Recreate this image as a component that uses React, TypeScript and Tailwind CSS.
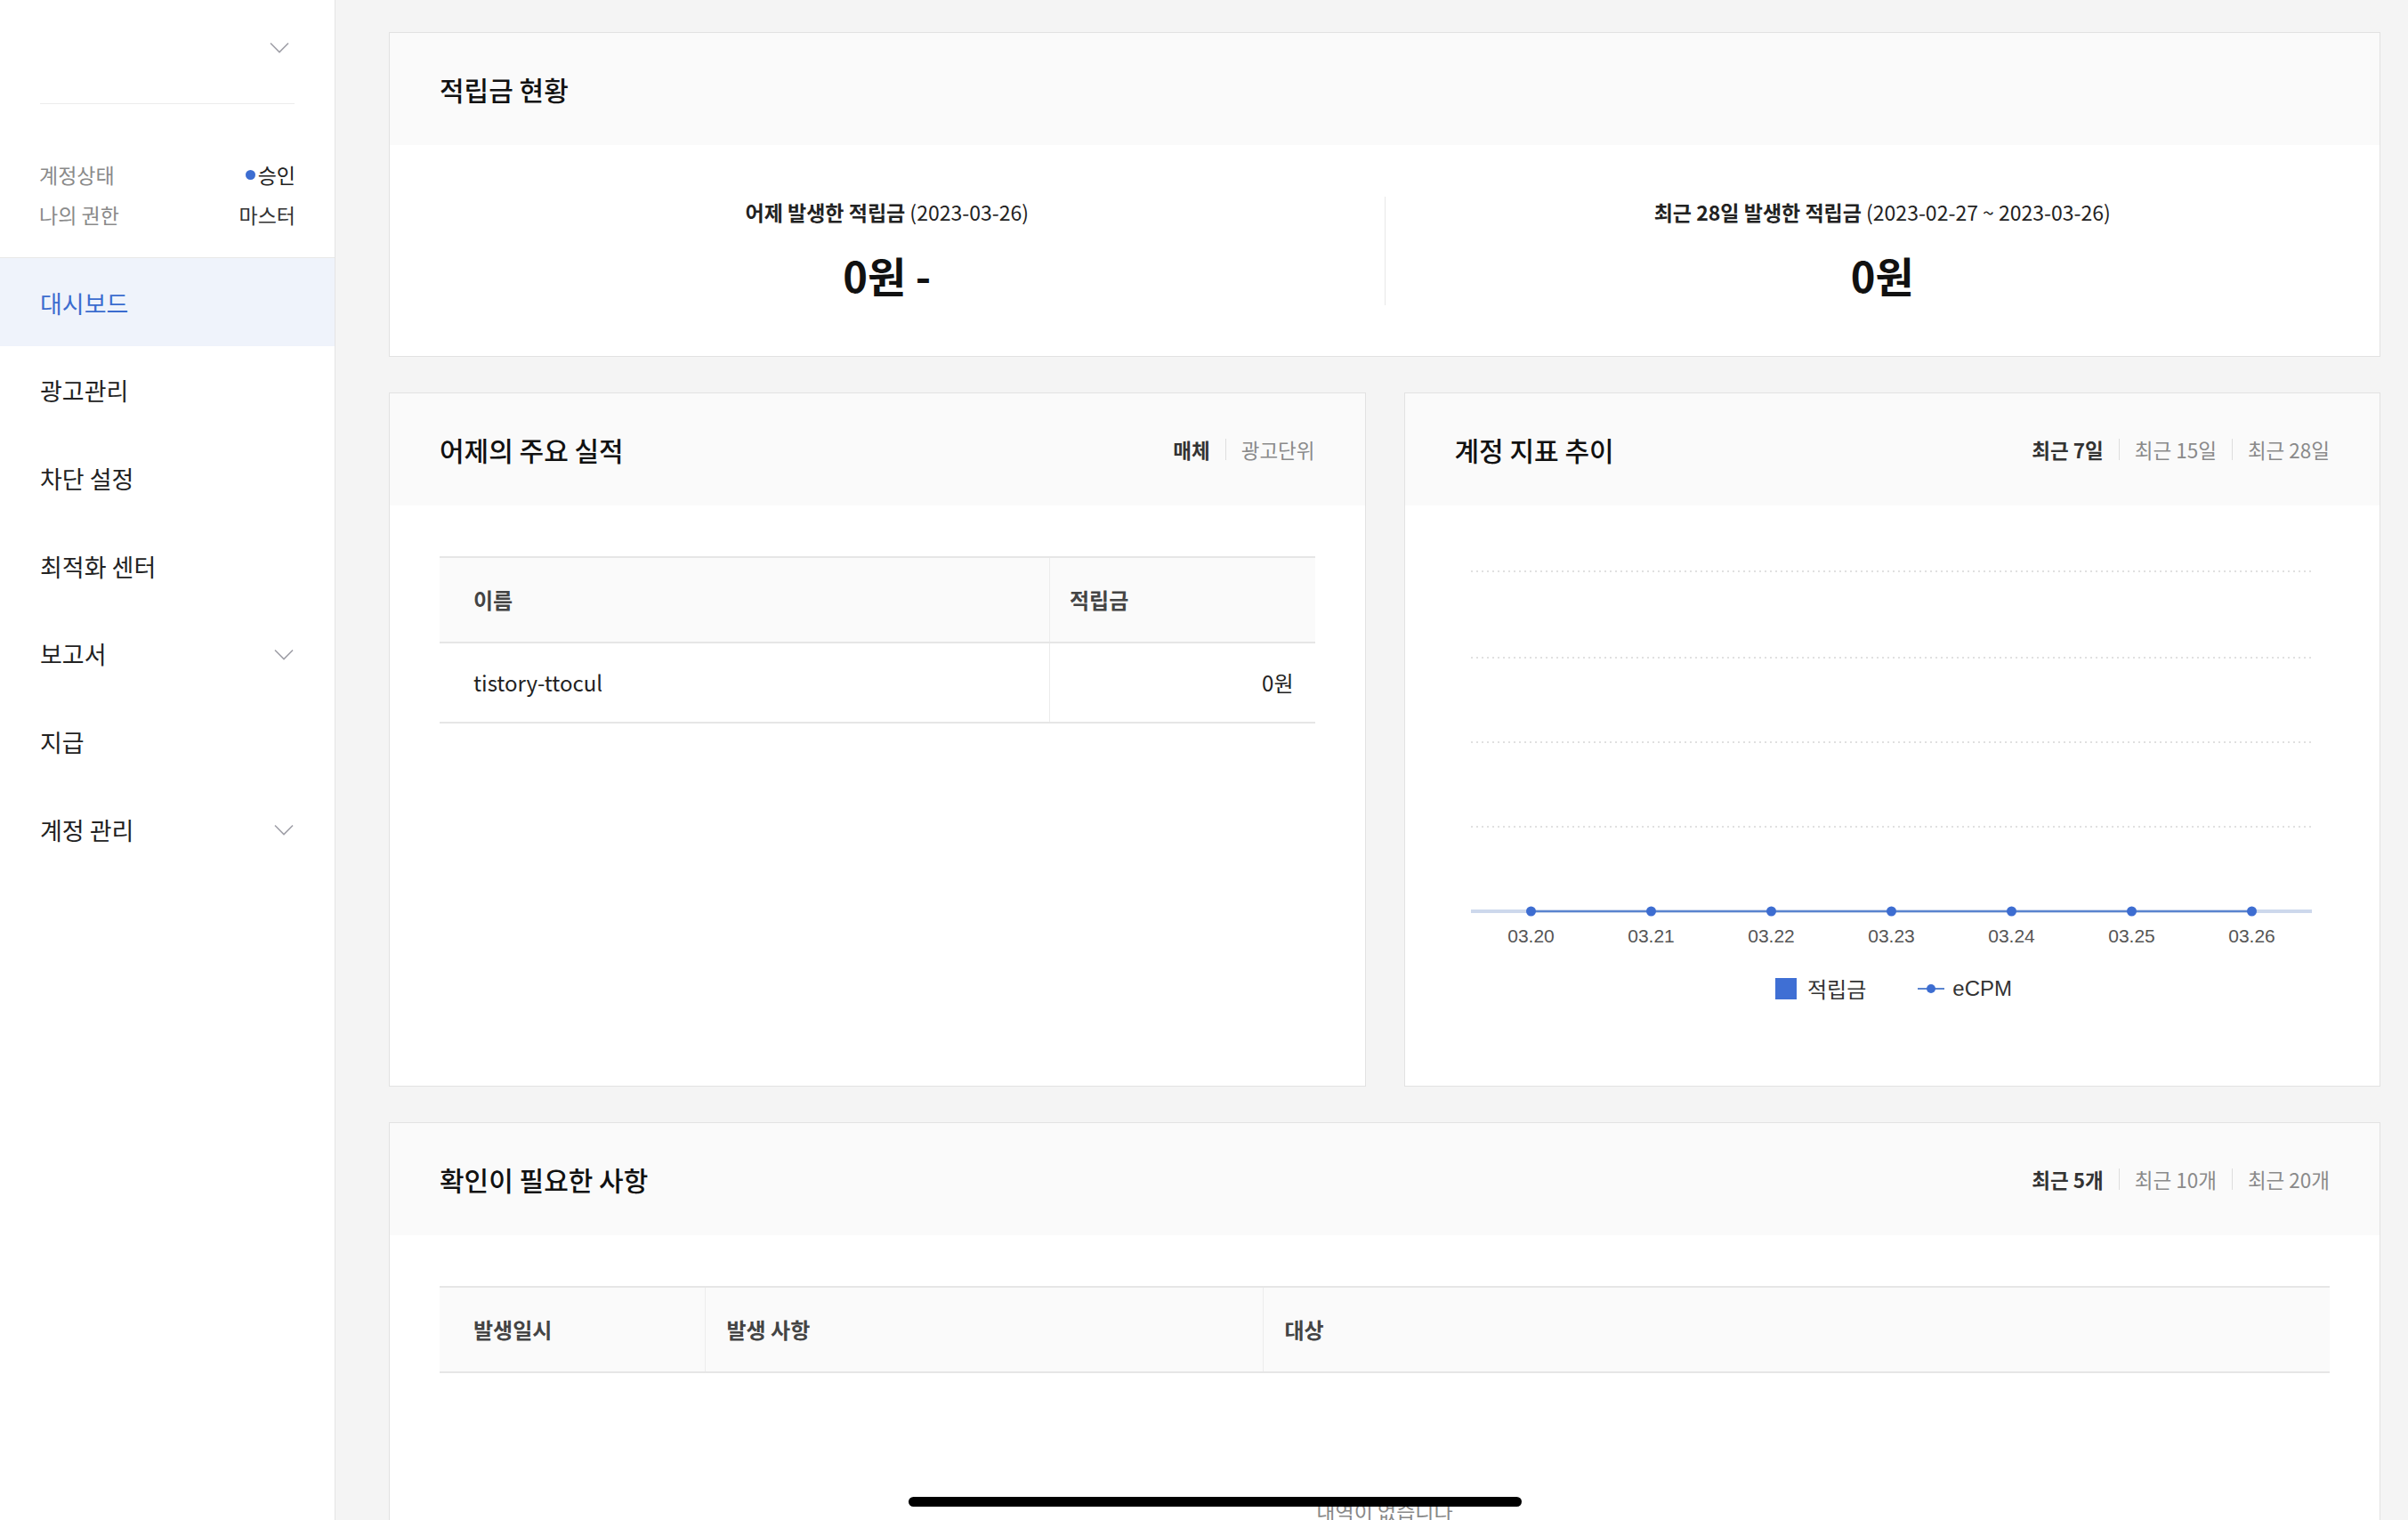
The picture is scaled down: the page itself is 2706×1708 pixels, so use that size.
import { Fragment } from "react";

const menu = [
  { label: "대시보드", active: true },
  { label: "광고관리" },
  { label: "차단 설정" },
  { label: "최적화 센터" },
  { label: "보고서", sub: true },
  { label: "지급" },
  { label: "계정 관리", sub: true },
];

const days = ["03.20", "03.21", "03.22", "03.23", "03.24", "03.25", "03.26"];

function Chevron() {
  return (
    <svg width="22" height="13" viewBox="0 0 22 13" fill="none">
      <path d="M1 1.5l10 10 10-10" stroke="#a0a0a8" strokeWidth="1.6" />
    </svg>
  );
}

function Toggle({ items }: { items: string[] }) {
  return (
    <div className="flex items-center text-[22.5px] leading-none">
      {items.map((t, i) => (
        <Fragment key={t}>
          {i > 0 && <span className="mx-[17px] h-[24px] w-px bg-[#dedede]" />}
          <span className={i === 0 ? "font-bold text-[#333]" : "text-[#8a8a8a]"}>{t}</span>
        </Fragment>
      ))}
    </div>
  );
}

function CardHeader({ title, toggle }: { title: string; toggle?: string[] }) {
  return (
    <div className="flex h-[126px] shrink-0 items-center justify-between bg-[#fafafa] px-[56px]">
      <h2 className="text-[30px] font-medium text-[#111]">{title}</h2>
      {toggle && <Toggle items={toggle} />}
    </div>
  );
}

function Chart() {
  const xs = days.map((_, i) => 67.5 + i * 135);
  return (
    <svg width="945" height="440" viewBox="0 0 945 440">
      {[10, 107, 202, 297].map((y) => (
        <line key={y} x1="0" x2="945" y1={y} y2={y} stroke="#d6d6d6" strokeWidth="1.5" strokeDasharray="2 4" />
      ))}
      <line x1="0" x2="945" y1="392" y2="392" stroke="#cdd8ec" strokeWidth="4" />
      <line x1={xs[0]} x2={xs[6]} y1="392" y2="392" stroke="#5a84cf" strokeWidth="2" />
      {xs.map((x, i) => (
        <g key={days[i]}>
          <circle cx={x} cy="392" r="5.5" fill="#3d6dd1" />
          <text x={x} y="427" textAnchor="middle" fontSize="21" fill="#555" fontFamily="'Liberation Sans', Arial, sans-serif">
            {days[i]}
          </text>
        </g>
      ))}
    </svg>
  );
}

export default function App() {
  return (
    <div className="relative flex h-[1708px] w-full overflow-hidden bg-[#f4f4f4] font-['Noto_Sans_CJK_KR','Noto_Sans',sans-serif] text-[#222]">
      {/* side navigation */}
      <aside className="w-[377px] shrink-0 border-r border-[#e4e4e4] bg-white">
        <div className="mx-[45px] flex h-[117px] items-center justify-end border-b border-[#ececec] pb-[10px] pr-[6px]">
          <Chevron />
        </div>
        <div className="border-b border-[#e8e8e8] px-[44px] pb-[25px] pt-[57px] text-[23px]">
          <div className="flex h-[45px] items-center justify-between">
            <span className="text-[#8a8a8a]">계정상태</span>
            <span className="flex items-center gap-[3px]">
              <span className="h-[11px] w-[11px] rounded-full bg-[#3d6dd1]" />
              승인
            </span>
          </div>
          <div className="flex h-[45px] items-center justify-between">
            <span className="text-[#8a8a8a]">나의 권한</span>
            <span className="text-[#333]">마스터</span>
          </div>
        </div>
        <nav>
          {menu.map((m) => (
            <div
              key={m.label}
              className={
                "flex h-[98.7px] items-center justify-between pl-[45px] pr-[46px] pt-[3px] text-[27px] " +
                (m.active ? "bg-[#eff3fb] text-[#3b6ccf]" : "text-[#222]")
              }
            >
              <span>{m.label}</span>
              {m.sub && <Chevron />}
            </div>
          ))}
        </nav>
      </aside>

      {/* dashboard */}
      <main className="flex min-w-0 flex-1 flex-col gap-[40px] pl-[60px] pr-[31px] pt-[36px]">
        <section className="flex flex-col border border-[#e2e2e2] bg-white">
          <CardHeader title="적립금 현황" />
          <div className="flex h-[237px] items-start pt-[58px]">
            <div className="flex h-[122px] flex-1 flex-col items-center border-r border-[#e8e8e8]">
              <p className="text-[23px] leading-[34px]">
                <b className="font-bold">어제 발생한 적립금</b> (2023-03-26)
              </p>
              <p className="mt-[23px] text-[47px] font-bold leading-[62px] text-[#111]">0원 -</p>
            </div>
            <div className="flex h-[122px] flex-1 flex-col items-center">
              <p className="text-[23px] leading-[34px]">
                <b className="font-bold">최근 28일 발생한 적립금</b> (2023-02-27 ~ 2023-03-26)
              </p>
              <p className="mt-[23px] text-[47px] font-bold leading-[62px] text-[#111]">0원</p>
            </div>
          </div>
        </section>

        <div className="flex gap-[43px]">
          <section className="flex h-[780px] flex-1 flex-col border border-[#e2e2e2] bg-white">
            <CardHeader title="어제의 주요 실적" toggle={["매체", "광고단위"]} />
            <div className="px-[56px] pt-[57px]">
              <table className="w-full border-collapse text-[24px]">
                <thead>
                  <tr className="h-[96px] border-y-2 border-[#e6e6e6] bg-[#fafafa] text-left text-[#444]">
                    <th className="pl-[38px] font-bold">이름</th>
                    <th className="w-[298px] border-l border-[#ececec] pl-[22px] font-bold">적립금</th>
                  </tr>
                </thead>
                <tbody>
                  <tr className="h-[90px] border-b-2 border-[#e6e6e6]">
                    <td className="pl-[38px]">tistory-ttocul</td>
                    <td className="border-l border-[#ececec] pr-[24px] text-right">0원</td>
                  </tr>
                </tbody>
              </table>
            </div>
          </section>

          <section className="flex h-[780px] flex-1 flex-col border border-[#e2e2e2] bg-white">
            <CardHeader title="계정 지표 추이" toggle={["최근 7일", "최근 15일", "최근 28일"]} />
            <div className="flex flex-col pl-[74px] pt-[64px]">
              <Chart />
              <div className="mt-[27px] flex w-[945px] items-center justify-center pl-[6px] text-[24px] leading-none text-[#333]">
                <span className="h-[24px] w-[24px] bg-[#3f6fd4]" />
                <span className="ml-[12px]">적립금</span>
                <svg className="ml-[58px]" width="30" height="12" viewBox="0 0 30 12">
                  <line x1="0" x2="30" y1="6" y2="6" stroke="#5a84cf" strokeWidth="2" />
                  <circle cx="15" cy="6" r="5" fill="#3d6dd1" />
                </svg>
                <span className="ml-[9px] font-['Liberation_Sans',Arial,sans-serif]">eCPM</span>
              </div>
            </div>
          </section>
        </div>

        <section className="flex shrink-0 flex-col border border-[#e2e2e2] bg-white">
          <CardHeader title="확인이 필요한 사항" toggle={["최근 5개", "최근 10개", "최근 20개"]} />
          <div className="px-[56px] pt-[57px]">
            <table className="w-full border-collapse text-[24px]">
              <thead>
                <tr className="h-[96px] border-y-2 border-[#e6e6e6] bg-[#fafafa] text-left text-[#444]">
                  <th className="w-[298px] pl-[38px] font-bold">발생일시</th>
                  <th className="w-[627px] border-l border-[#ececec] pl-[24px] font-bold">발생 사항</th>
                  <th className="border-l border-[#ececec] pl-[24px] font-bold">대상</th>
                </tr>
              </thead>
            </table>
            <p className="pb-[150px] pt-[138px] text-center text-[23px] text-[#888]">내역이 없습니다</p>
          </div>
        </section>
      </main>

      {/* home indicator */}
      <div className="absolute left-[1021px] top-[1682px] h-[11px] w-[689px] rounded-full bg-black" />
    </div>
  );
}
